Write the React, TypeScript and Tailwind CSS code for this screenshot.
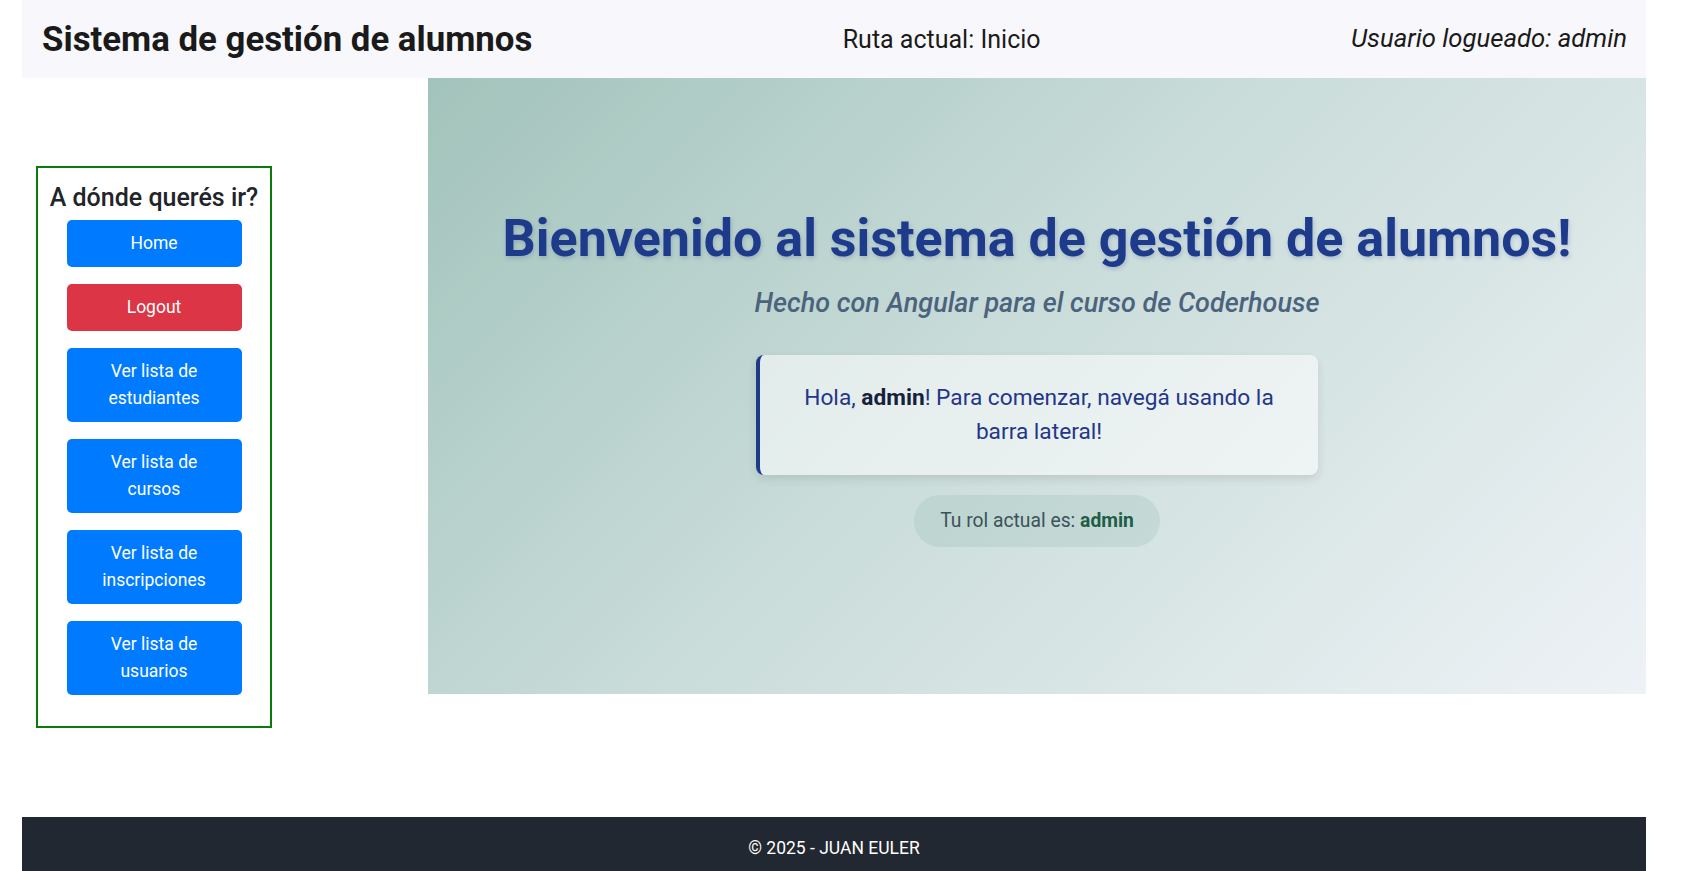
import React from "react";

const navBtns = [
  { label: "Home", red: false },
  { label: "Logout", red: true },
  { label: "Ver lista de estudiantes", red: false },
  { label: "Ver lista de cursos", red: false },
  { label: "Ver lista de inscripciones", red: false },
  { label: "Ver lista de usuarios", red: false },
];

export default function App() {
  return (
    <div className="min-h-[871px] bg-white font-['Roboto','Liberation_Sans',sans-serif] text-[#212529]">
      <div className="ml-[22px] w-[1624px]">
        <header className="flex h-[78px] items-center justify-between bg-[#f8f8fc] pl-[20px] pr-[19px]">
          <h1 className="text-[34.8px] font-bold leading-none text-[#1a1a1a]">Sistema de gestión de alumnos</h1>
          <div className="text-[25px] leading-none text-[#1a1a1a]">Ruta actual: Inicio</div>
          <div className="text-[25.7px] italic leading-none text-[#1a1a1a]">Usuario logueado: admin</div>
        </header>

        <div className="flex items-start">
          <aside className="w-[406px] shrink-0 pl-[14px] pt-[88px] pb-[89px]">
            <div className="flex w-[236px] flex-col items-center border-2 border-[#0a7a0a] pt-[14px] pb-[31px]">
              <h4 className="text-[25px] font-medium leading-[32px] text-[#212529]">A dónde querés ir?</h4>
              <div className="mt-[6px] flex flex-col gap-[17px]">
                {navBtns.map((b) => (
                  <button
                    key={b.label}
                    className={
                      "w-[175px] rounded-[5px] px-[22px] py-[10px] text-center text-[17.5px] leading-[27px] text-white " +
                      (b.red ? "bg-[#dc3545]" : "bg-[#007bff]")
                    }
                  >
                    {b.label}
                  </button>
                ))}
              </div>
            </div>
          </aside>

          <main className="flex h-[616px] flex-1 flex-col items-center bg-[linear-gradient(135deg,#a2c3bb_0%,#c9dcd9_45%,#eef2f6_100%)] pt-[130px]">
            <h2 className="text-[52px] font-bold leading-[62px] text-[#1e3a8a] [text-shadow:1px_2px_4px_rgba(30,58,138,0.22)]">
              Bienvenido al sistema de gestión de alumnos!
            </h2>
            <p className="mt-[14px] text-[27px] font-medium italic leading-[38px] text-[#4b637d]">
              Hecho con Angular para el curso de Coderhouse
            </p>
            <div className="mt-[33px] w-[562px] rounded-[8px] border-l-[4px] border-[#1e3a8a] bg-[rgba(255,255,255,0.55)] px-[36px] py-[26px] text-center text-[22.7px] leading-[34px] text-[#24368a] shadow-[0_4px_10px_rgba(0,0,0,0.1)]">
              Hola, <b className="font-bold text-[#16213e]">admin</b>! Para comenzar, navegá usando la barra lateral!
            </div>
            <div className="mt-[20px] flex h-[52px] items-center rounded-full bg-[rgba(120,170,160,0.18)] px-[26px] text-[19.3px] text-[#3b5259]">
              Tu rol actual es:&nbsp;<b className="font-bold text-[#1d5e47]">admin</b>
            </div>
          </main>
        </div>

        <footer className="flex h-[56px] items-center justify-center bg-[#222831] pt-[6px] text-[17.5px] text-white">
          © 2025 - JUAN EULER
        </footer>
      </div>
    </div>
  );
}
